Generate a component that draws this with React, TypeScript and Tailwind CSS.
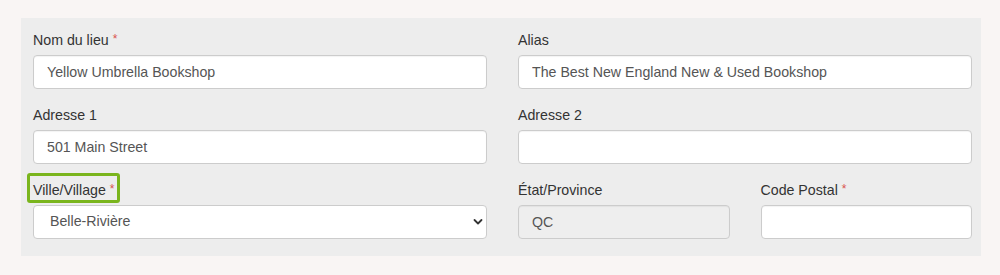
import React from "react";

function Required() {
  return <span className="ml-[4px] align-top text-[12px] leading-[19px] text-[#d9534f]">*</span>;
}

function Field({
  label,
  value = "",
  required = false,
  disabled = false,
}: {
  label: string;
  value?: string;
  required?: boolean;
  disabled?: boolean;
}) {
  return (
    <div className="mb-[16px]">
      <label className="mb-[5px] block h-[20px] text-[14.2px] leading-[20px] text-[#333]">
        {label}
        {required && <Required />}
      </label>
      <input
        type="text"
        value={value}
        readOnly
        disabled={disabled}
        className={
          "block h-[34px] w-full rounded-[4px] border border-[#ccc] px-[13px] text-[14.2px] text-[#555] shadow-[inset_0_1px_1px_rgba(0,0,0,0.05)] outline-none " +
          (disabled ? "bg-[#eee]" : "bg-white")
        }
      />
    </div>
  );
}

export default function App() {
  return (
    <div className="min-h-screen bg-[#f9f5f4] pt-[18px] font-['Liberation_Sans',Arial,sans-serif]">
      <div className="ml-[21px] w-[960px] bg-[#ededed] pb-[1px] pl-[12px] pr-[9px] pt-[12px]">
        <div className="grid grid-cols-2 gap-x-[31px]">
          <Field label="Nom du lieu" value="Yellow Umbrella Bookshop" required />
          <Field label="Alias" value="The Best New England New & Used Bookshop" />
          <Field label="Adresse 1" value="501 Main Street" />
          <Field label="Adresse 2" />

          {/* ville with highlight */}
          <div className="mb-[16px]">
            <label className="relative mb-[5px] flex h-[20px] w-fit items-start text-[14.2px] leading-[20px] text-[#333]">
              Ville/Village
              <Required />
              <span className="pointer-events-none absolute -bottom-[3px] -left-[6px] -right-[5px] -top-[7px] rounded-[3px] border-[3px] border-[#7ab51d]" />
            </label>
            <div className="relative">
              <select
                value="Belle-Rivière"
                onChange={() => {}}
                className="block h-[34px] w-full appearance-none rounded-[4px] border border-[#ccc] bg-white pl-[16px] pr-[30px] text-[14.2px] text-[#555] outline-none"
              >
                <option>Belle-Rivière</option>
              </select>
              <svg
                className="pointer-events-none absolute right-[4px] top-[13px]"
                width="10"
                height="8"
                viewBox="0 0 10 8"
              >
                <polyline points="1.5,2 5,5.5 8.5,2" fill="none" stroke="#333" strokeWidth="1.8" strokeLinecap="round" strokeLinejoin="round" />
              </svg>
            </div>
          </div>

          <div className="grid grid-cols-2 gap-x-[31px]">
            <Field label="État/Province" value="QC" disabled />
            <Field label="Code Postal" required />
          </div>
        </div>
      </div>
    </div>
  );
}
